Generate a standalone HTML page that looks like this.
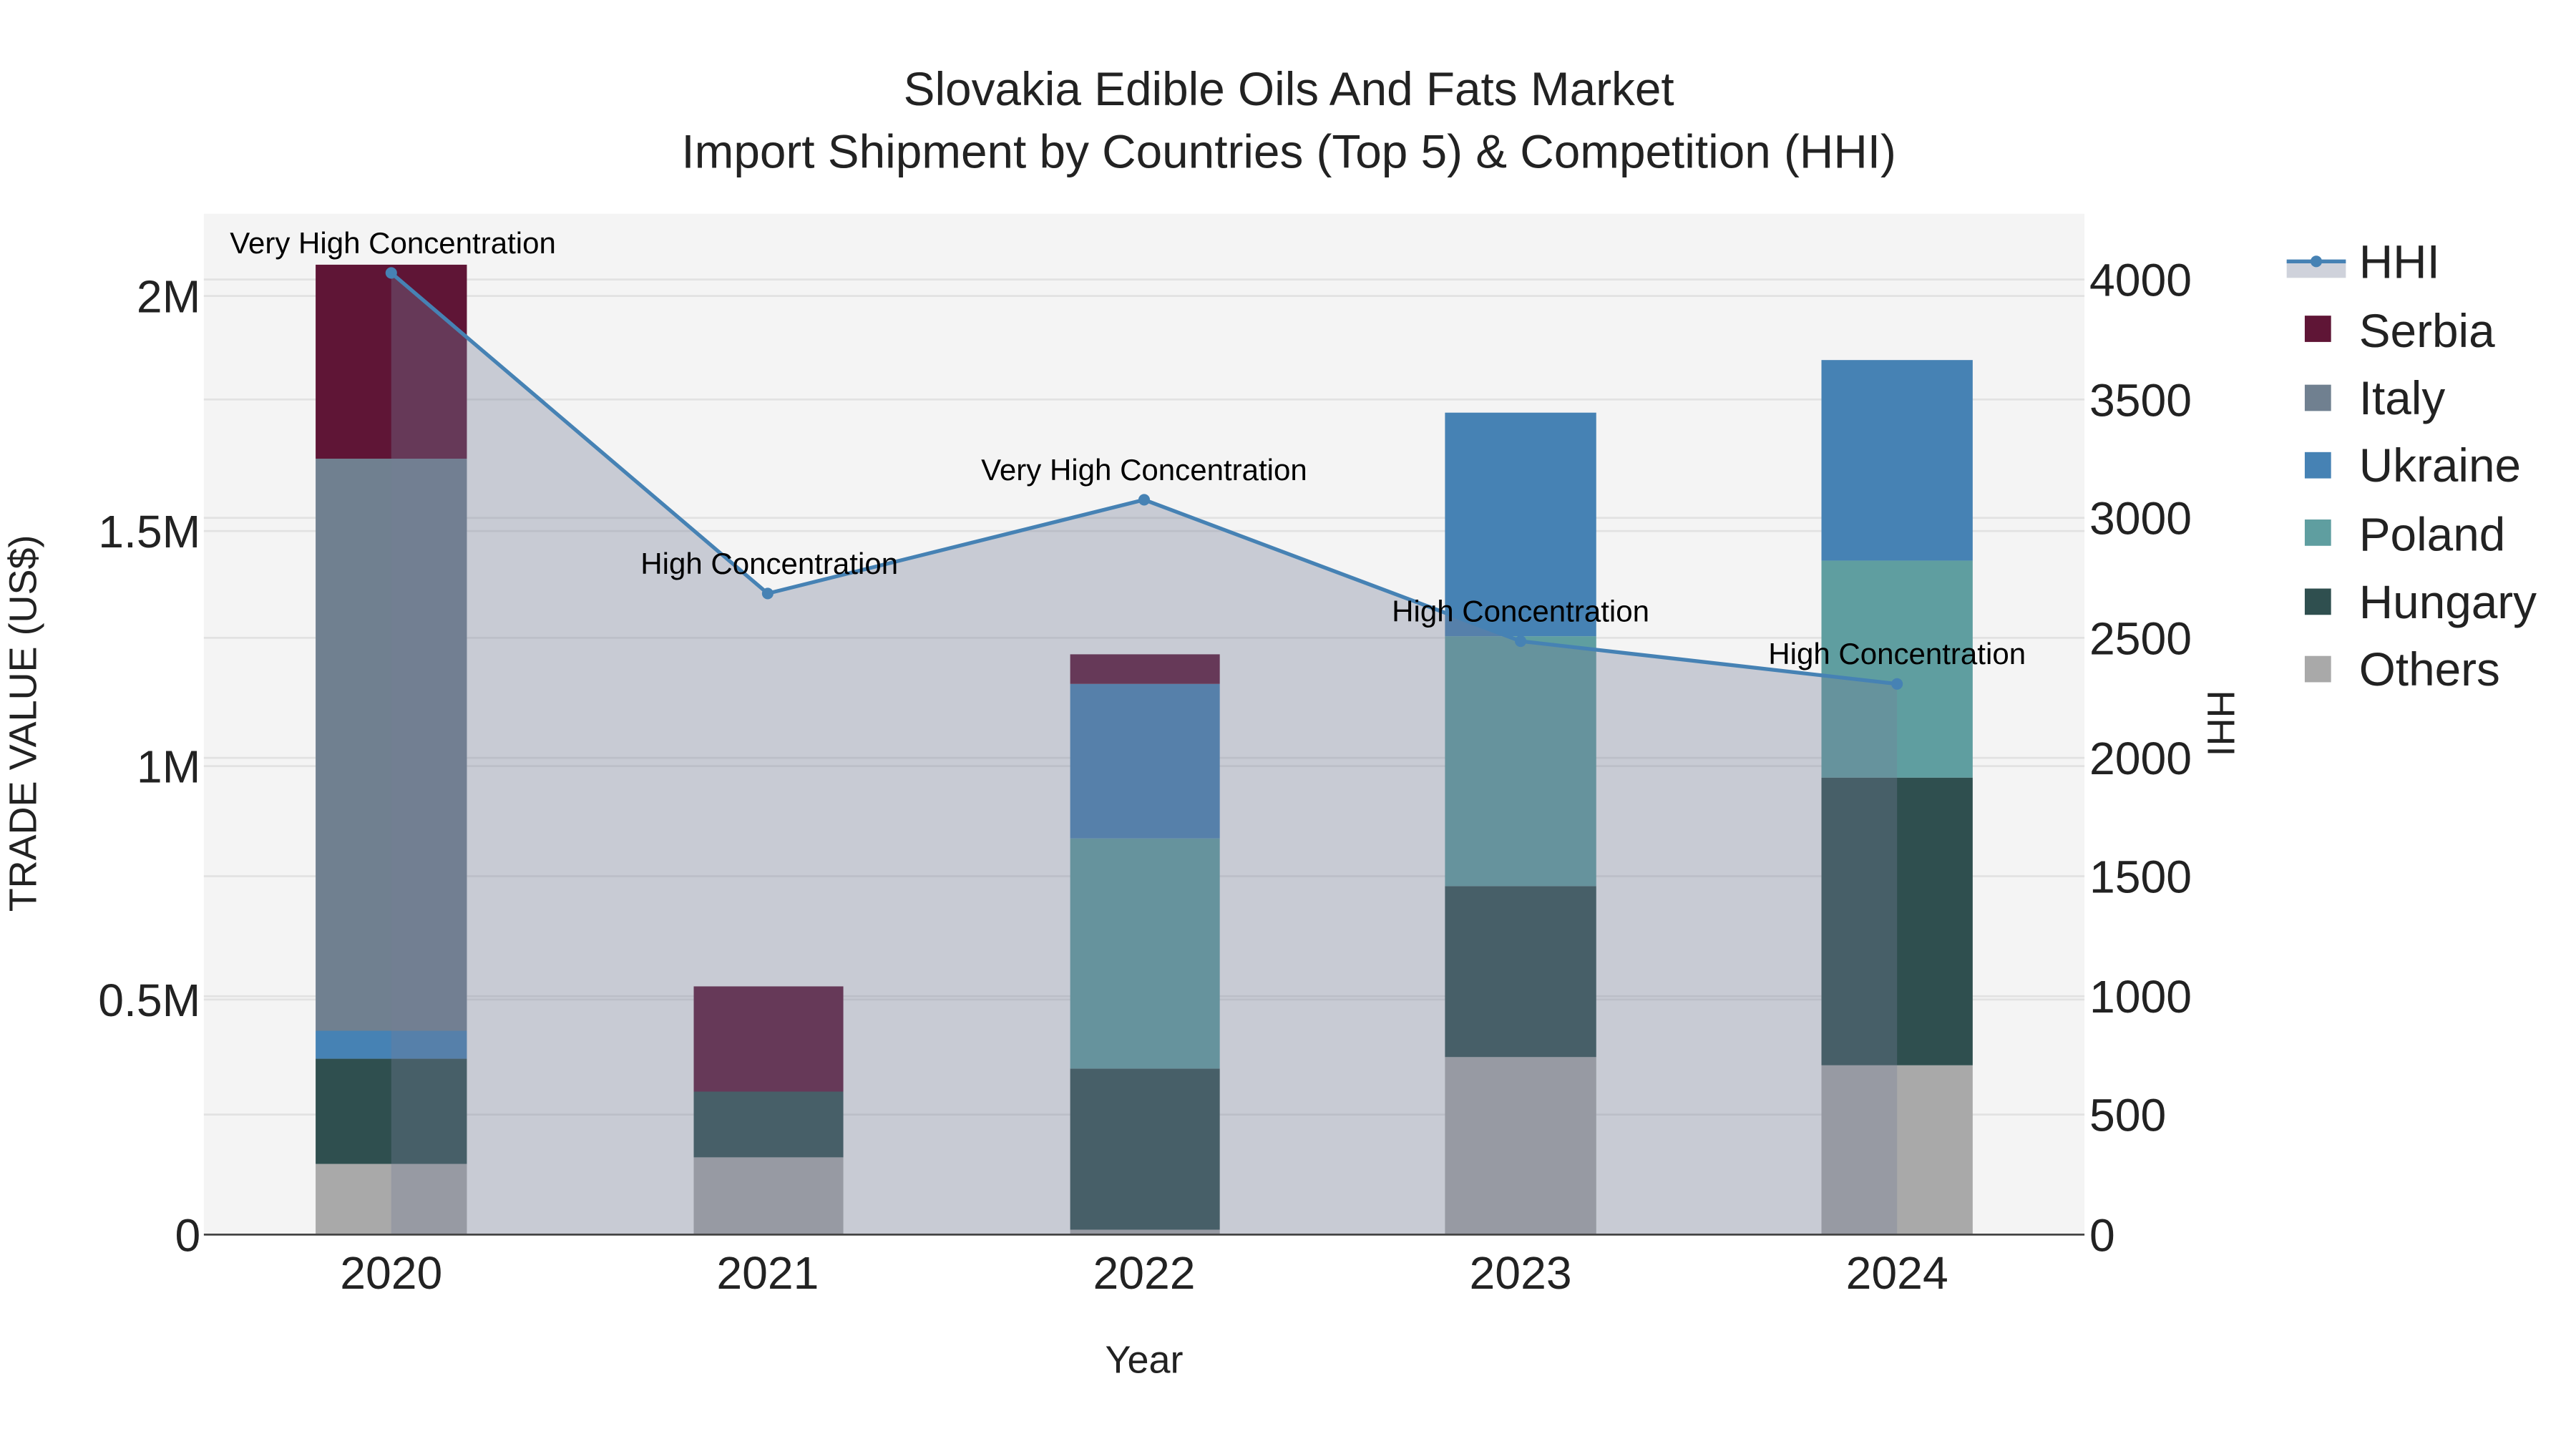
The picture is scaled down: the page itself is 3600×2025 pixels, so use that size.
<!DOCTYPE html>
<html><head><meta charset="utf-8"><style>html,body{margin:0;padding:0;background:#fff}svg{display:block}text{font-family:"Liberation Sans",Arial,sans-serif}</style></head><body>
<svg width="3600" height="2025" viewBox="0 0 1567 881.4" xmlns="http://www.w3.org/2000/svg">
<rect width="1567" height="881.4" fill="#fff"/>
<rect x="124" y="130" width="1144" height="621" fill="#f4f4f4"/>
<g stroke="#e2e2e2" stroke-width="1.2">
<line x1="124" x2="1268" y1="608" y2="608"/><line x1="124" x2="1268" y1="466" y2="466"/><line x1="124" x2="1268" y1="323" y2="323"/><line x1="124" x2="1268" y1="180" y2="180"/>
<line x1="124" x2="1268" y1="678" y2="678"/><line x1="124" x2="1268" y1="606" y2="606"/><line x1="124" x2="1268" y1="533" y2="533"/><line x1="124" x2="1268" y1="461" y2="461"/><line x1="124" x2="1268" y1="388" y2="388"/><line x1="124" x2="1268" y1="315" y2="315"/><line x1="124" x2="1268" y1="243" y2="243"/><line x1="124" x2="1268" y1="170" y2="170"/>
</g>
<rect x="192" y="708" width="92" height="43" fill="#a9a9a9"/>
<rect x="192" y="644" width="92" height="64" fill="#2f4f4f"/>
<rect x="192" y="627" width="92" height="17" fill="#4682b4"/>
<rect x="192" y="279" width="92" height="348" fill="#708090"/>
<rect x="192" y="161" width="92" height="118" fill="#5f1536"/>
<rect x="422" y="704" width="91" height="47" fill="#a9a9a9"/>
<rect x="422" y="664" width="91" height="40" fill="#2f4f4f"/>
<rect x="422" y="600" width="91" height="64" fill="#5f1536"/>
<rect x="651" y="748" width="91" height="3" fill="#a9a9a9"/>
<rect x="651" y="650" width="91" height="98" fill="#2f4f4f"/>
<rect x="651" y="510" width="91" height="140" fill="#5f9ea0"/>
<rect x="651" y="416" width="91" height="94" fill="#4682b4"/>
<rect x="651" y="398" width="91" height="18" fill="#5f1536"/>
<rect x="879" y="643" width="92" height="108" fill="#a9a9a9"/>
<rect x="879" y="539" width="92" height="104" fill="#2f4f4f"/>
<rect x="879" y="387" width="92" height="152" fill="#5f9ea0"/>
<rect x="879" y="251" width="92" height="136" fill="#4682b4"/>
<rect x="1108" y="648" width="92" height="103" fill="#a9a9a9"/>
<rect x="1108" y="473" width="92" height="175" fill="#2f4f4f"/>
<rect x="1108" y="341" width="92" height="132" fill="#5f9ea0"/>
<rect x="1108" y="219" width="92" height="122" fill="#4682b4"/>
<polygon points="238,166 467,361 696,304 925,390 1154,416 1154,751 238,751" fill="rgb(118,127,152)" fill-opacity="0.35"/>
<polyline points="238,166 467,361 696,304 925,390 1154,416" fill="none" stroke="#4682b4" stroke-width="2.3"/>
<g fill="#4682b4"><circle cx="238" cy="166" r="3.5"/><circle cx="467" cy="361" r="3.5"/><circle cx="696" cy="304" r="3.5"/><circle cx="925" cy="390" r="3.5"/><circle cx="1154" cy="416" r="3.5"/></g>
<line x1="124" x2="1268" y1="751" y2="751" stroke="#444" stroke-width="1.2"/>
<g font-size="18.3" fill="#000" text-anchor="middle">
<text x="239" y="154">Very High Concentration</text>
<text x="468" y="349">High Concentration</text>
<text x="696" y="292">Very High Concentration</text>
<text x="925" y="378">High Concentration</text>
<text x="1154" y="404">High Concentration</text>
</g>
<g font-size="28" fill="#222" text-anchor="end">
<text x="122" y="761">0</text><text x="122" y="618">0.5M</text><text x="122" y="476">1M</text><text x="122" y="333">1.5M</text><text x="122" y="190">2M</text>
</g>
<g font-size="28" fill="#222" text-anchor="start">
<text x="1271" y="761">0</text><text x="1271" y="688">500</text><text x="1271" y="616">1000</text><text x="1271" y="543">1500</text><text x="1271" y="471">2000</text><text x="1271" y="398">2500</text><text x="1271" y="325">3000</text><text x="1271" y="253">3500</text><text x="1271" y="180">4000</text>
</g>
<g font-size="28" fill="#222" text-anchor="middle">
<text x="238" y="784">2020</text><text x="467" y="784">2021</text><text x="696" y="784">2022</text><text x="925" y="784">2023</text><text x="1154" y="784">2024</text>
</g>
<text x="696" y="835" font-size="23.5" fill="#222" text-anchor="middle">Year</text>
<text transform="translate(22,440) rotate(-90)" font-size="23.5" fill="#222" text-anchor="middle">TRADE VALUE (US$)</text>
<text transform="translate(1343,440) rotate(90)" font-size="23.5" fill="#222" text-anchor="middle">HHI</text>
<g font-size="28.6" fill="#222" text-anchor="middle">
<text x="784" y="64">Slovakia Edible Oils And Fats Market</text>
<text x="784" y="102">Import Shipment by Countries (Top 5) &amp; Competition (HHI)</text>
</g>
<rect x="1391" y="159" width="36" height="10" fill="rgb(118,127,152)" fill-opacity="0.35"/>
<line x1="1391" x2="1427" y1="159" y2="159" stroke="#4682b4" stroke-width="2.3"/>
<circle cx="1409" cy="159" r="3.5" fill="#4682b4"/>
<rect x="1402" y="192" width="16" height="16" fill="#5f1536"/>
<rect x="1402" y="234" width="16" height="16" fill="#708090"/>
<rect x="1402" y="275" width="16" height="16" fill="#4682b4"/>
<rect x="1402" y="316" width="16" height="16" fill="#5f9ea0"/>
<rect x="1402" y="358" width="16" height="16" fill="#2f4f4f"/>
<rect x="1402" y="399" width="16" height="16" fill="#a9a9a9"/>
<g font-size="28.6" fill="#222">
<text x="1435" y="169">HHI</text><text x="1435" y="211">Serbia</text><text x="1435" y="252">Italy</text><text x="1435" y="293">Ukraine</text><text x="1435" y="335">Poland</text><text x="1435" y="376">Hungary</text><text x="1435" y="417">Others</text>
</g>
</svg>
</body></html>
